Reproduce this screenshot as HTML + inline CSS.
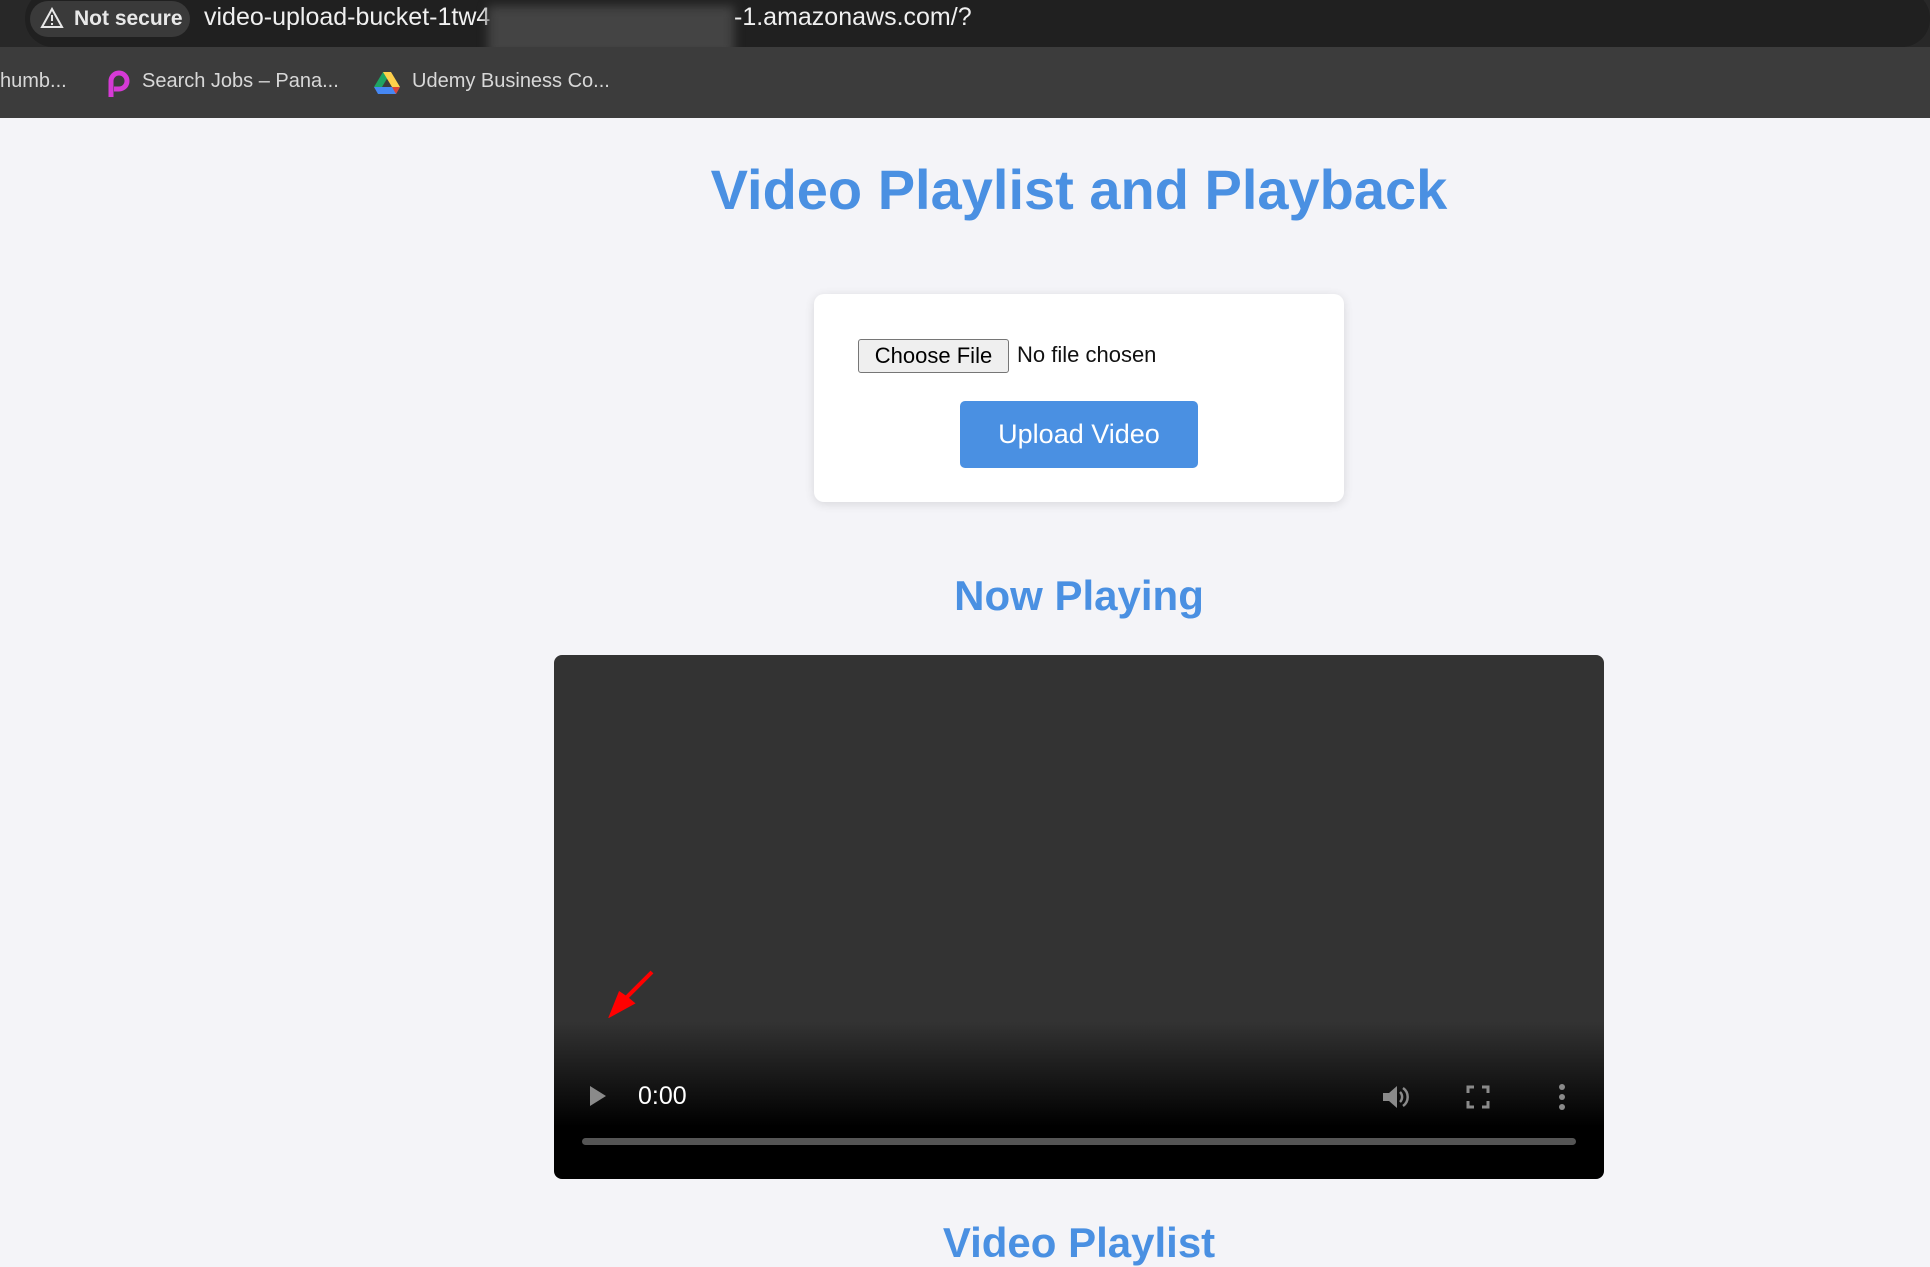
<!DOCTYPE html>
<html><head><meta charset="utf-8"><style>
*{margin:0;padding:0;box-sizing:border-box}
body{width:1930px;height:1258px;overflow:hidden;background:#f4f4f8;font-family:"Liberation Sans",Arial,sans-serif;position:relative}
.abs{position:absolute}
.top{left:0;top:0;width:1930px;height:47px;background:#282828}
.url{left:25px;top:-10px;width:1905px;height:57px;background:#202020;border-radius:28px}
.ns{left:30px;top:1px;width:160px;height:36px;background:#3a3a3a;border-radius:18px;color:#e8e8e8;font-size:21px;line-height:36px;padding-left:44px;font-weight:bold}
.bm{left:0;top:47px;width:1930px;height:71px;background:#3c3c3c;color:#d8d8d8;font-size:20px}
h1,h2{position:absolute;color:#4a90e2;font-weight:bold;text-align:center;width:1000px;left:579px}
.card{left:814px;top:294px;width:530px;height:208px;background:#fff;border-radius:10px;box-shadow:0 2px 10px rgba(0,0,0,.12)}
.cf{left:858px;top:339px;width:151px;height:34px;background:#efefef;border:1px solid #767676;border-radius:3px;font-size:22px;text-align:center;line-height:32px;color:#000}
.btn{left:960px;top:401px;width:238px;height:67px;background:#4a90e2;border-radius:5px;color:#fff;font-size:27px;text-align:center;line-height:67px}
.vid{left:554px;top:655px;width:1050px;height:524px;border-radius:8px;background:linear-gradient(#333 0,#333 70%,#000 90%,#000 100%);overflow:hidden}
</style></head><body>
<div class="abs top"></div>
<div class="abs url"></div>
<div class="abs ns">Not secure</div>
<svg class="abs" style="left:40px;top:7px" width="24" height="22" viewBox="0 0 24 22"><path d="M12 2 L22 20 H2 Z" fill="none" stroke="#e8e8e8" stroke-width="2"/><path d="M12 8v6M12 16v2" stroke="#e8e8e8" stroke-width="2"/></svg>
<div class="abs" style="left:204px;top:3px;color:#f0f0f0;font-size:25px">video-upload-bucket-1tw4</div>
<div class="abs" style="left:488px;top:6px;width:246px;height:50px;background:#444;filter:blur(5px)"></div>
<div class="abs" style="left:734px;top:3px;color:#f0f0f0;font-size:25px">-1.amazonaws.com/?</div>
<div class="abs bm">
<span class="abs" style="left:0;top:23px">humb...</span>
<svg class="abs" style="left:106px;top:22px" width="24" height="30" viewBox="0 0 24 30"><path d="M5 28 V12 A8 8 0 1 1 13 20 H8" fill="none" stroke="#d63ad6" stroke-width="5"/></svg>
<span class="abs" style="left:142px;top:23px">Search Jobs – Pana...</span>
<svg class="abs" style="left:374px;top:24px" width="26" height="24" viewBox="0 0 26 24"><path d="M9 1h8l-9 15H0z" fill="#1fa463"/><path d="M17 1l9 15h-8L9 1z" fill="#ffd04b"/><path d="M0 16h26l-4 7H4z" fill="#4688f4"/><path d="M18 16h8l-4 7z" fill="#db4437"/></svg>
<span class="abs" style="left:412px;top:23px">Udemy Business Co...</span>
</div>
<h1 style="top:157px;font-size:56px">Video Playlist and Playback</h1>
<div class="abs card"></div>
<div class="abs cf">Choose File</div>
<div class="abs" style="left:1017px;top:342px;font-size:22px;color:#111">No file chosen</div>
<div class="abs btn">Upload Video</div>
<h2 style="top:572px;font-size:42px">Now Playing</h2>
<div class="abs vid"></div>
<svg class="abs" style="left:608px;top:968px" width="50" height="50" viewBox="0 0 50 50"><path d="M44 4 L18 30 L24 35 L4 46 L12 26 L18 30" fill="#f00" stroke="#f00" stroke-width="4"/></svg>
<svg class="abs" style="left:588px;top:1085px" width="20" height="22" viewBox="0 0 20 22"><path d="M2 1 L18 11 L2 21Z" fill="#8a8a8a"/></svg>
<div class="abs" style="left:638px;top:1082px;color:#fff;font-size:25px">0:00</div>
<svg class="abs" style="left:1380px;top:1082px" width="30" height="30" viewBox="0 0 30 30"><path d="M3 11h6l8-7v22l-8-7H3z" fill="#8a8a8a"/><path d="M20 10a7 7 0 0 1 0 10M23 6a11 11 0 0 1 0 18" fill="none" stroke="#8a8a8a" stroke-width="2.5"/></svg>
<svg class="abs" style="left:1466px;top:1084px" width="24" height="26" viewBox="0 0 24 26"><path d="M2 9V3h6M16 3h6v6M22 17v6h-6M8 23H2v-6" fill="none" stroke="#8a8a8a" stroke-width="3"/></svg>
<svg class="abs" style="left:1556px;top:1084px" width="12" height="26" viewBox="0 0 12 26"><circle cx="6" cy="3" r="3" fill="#8a8a8a"/><circle cx="6" cy="13" r="3" fill="#8a8a8a"/><circle cx="6" cy="23" r="3" fill="#8a8a8a"/></svg>
<div class="abs" style="left:582px;top:1138px;width:994px;height:7px;border-radius:4px;background:#555"></div>
<h2 style="top:1219px;font-size:42px">Video Playlist</h2>
</body></html>
